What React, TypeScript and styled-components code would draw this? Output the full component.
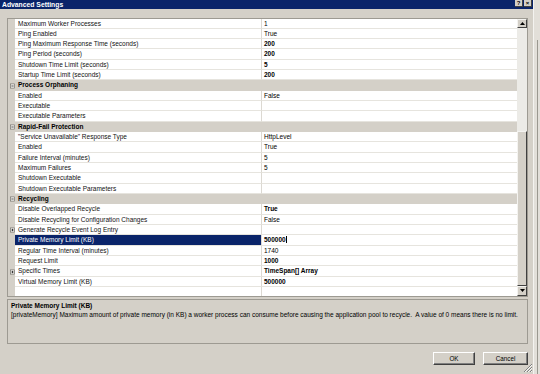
import React from 'react';
import styled, { createGlobalStyle } from 'styled-components';

type Prop = {
  kind: 'prop';
  name: string;
  value?: string;
  bold?: boolean;
  expandable?: boolean;
  selected?: boolean;
};

type Category = {
  kind: 'category';
  name: string;
};

type GridRow = Prop | Category;

const rows: GridRow[] = [
  { kind: 'prop', name: 'Maximum Worker Processes', value: '1' },
  { kind: 'prop', name: 'Ping Enabled', value: 'True' },
  { kind: 'prop', name: 'Ping Maximum Response Time (seconds)', value: '200', bold: true },
  { kind: 'prop', name: 'Ping Period (seconds)', value: '200', bold: true },
  { kind: 'prop', name: 'Shutdown Time Limit (seconds)', value: '5', bold: true },
  { kind: 'prop', name: 'Startup Time Limit (seconds)', value: '200', bold: true },
  { kind: 'category', name: 'Process Orphaning' },
  { kind: 'prop', name: 'Enabled', value: 'False' },
  { kind: 'prop', name: 'Executable' },
  { kind: 'prop', name: 'Executable Parameters' },
  { kind: 'category', name: 'Rapid-Fail Protection' },
  { kind: 'prop', name: '"Service Unavailable" Response Type', value: 'HttpLevel' },
  { kind: 'prop', name: 'Enabled', value: 'True' },
  { kind: 'prop', name: 'Failure Interval (minutes)', value: '5' },
  { kind: 'prop', name: 'Maximum Failures', value: '5' },
  { kind: 'prop', name: 'Shutdown Executable' },
  { kind: 'prop', name: 'Shutdown Executable Parameters' },
  { kind: 'category', name: 'Recycling' },
  { kind: 'prop', name: 'Disable Overlapped Recycle', value: 'True', bold: true },
  { kind: 'prop', name: 'Disable Recycling for Configuration Changes', value: 'False' },
  { kind: 'prop', name: 'Generate Recycle Event Log Entry', expandable: true },
  { kind: 'prop', name: 'Private Memory Limit (KB)', value: '500000', bold: true, selected: true },
  { kind: 'prop', name: 'Regular Time Interval (minutes)', value: '1740' },
  { kind: 'prop', name: 'Request Limit', value: '1000', bold: true },
  { kind: 'prop', name: 'Specific Times', value: 'TimeSpan[] Array', bold: true, expandable: true },
  { kind: 'prop', name: 'Virtual Memory Limit (KB)', value: '500000', bold: true },
  { kind: 'prop', name: '' },
];

const GlobalStyle = createGlobalStyle`
  html, body {
    margin: 0;
    padding: 0;
    background: #d4d0c8;
    overflow: hidden;
  }
  body {
    font-family: "Liberation Sans", Arial, sans-serif;
    font-size: 6.5px;
    color: #000;
  }
`;

const Screen = styled.div`
  display: flex;
  width: 540px;
  height: 374px;
  overflow: hidden;
`;

const Dialog = styled.div`
  width: 533px;
  height: 374px;
  display: flex;
  flex-direction: column;
  background: #d4d0c8;
  position: relative;
`;

const Behind = styled.div`
  flex: 1;
  background: #e2dfd9;
  border-left: 1px solid #f4f3f0;
  display: flex;
  justify-content: flex-end;
  padding-top: 40px;
`;

const BehindLine = styled.div`
  width: 1px;
  margin-right: 2px;
  background: #9a9890;
`;

const TitleBar = styled.div`
  height: 9px;
  background: #0a246a;
  display: flex;
  align-items: center;
  justify-content: space-between;
  padding: 0 1px 0 2px;
`;

const TitleText = styled.span`
  color: #fff;
  font-weight: bold;
  font-size: 6.8px;
  line-height: 9px;
`;

const CaptionButtons = styled.div`
  display: flex;
  gap: 1px;
  align-self: flex-start;
`;

const CaptionButton = styled.div`
  width: 8px;
  height: 7px;
  background: #d4d0c8;
  border-right: 1px solid #404040;
  border-bottom: 1px solid #404040;
  box-sizing: border-box;
  display: flex;
  align-items: center;
  justify-content: center;
  font-weight: bold;
  font-size: 6px;
  line-height: 6px;
`;

const Body = styled.div`
  flex: 1;
  display: flex;
  flex-direction: column;
  padding: 8.5px 5px 0 7px;
`;

const Grid = styled.div`
  height: 279px;
  border: 1px solid #9d9a92;
  box-sizing: border-box;
  display: flex;
  background: #fff;
`;

const RowList = styled.div`
  flex: 1;
  overflow: hidden;
  display: flex;
  flex-direction: column;
`;

const RowLine = styled.div<{ $category?: boolean }>`
  height: 10.33px;
  flex: none;
  display: flex;
  box-sizing: border-box;
  background: ${(p) => (p.$category ? '#d4d0c8' : '#fff')};
`;

const Gutter = styled.div`
  width: 7px;
  flex: none;
  background: #d4d0c8;
  display: flex;
  align-items: center;
  padding-left: 2px;
  box-sizing: border-box;
`;

const NameCell = styled.div<{ $selected?: boolean }>`
  width: 247px;
  flex: none;
  padding-left: 3px;
  box-sizing: border-box;
  border-right: 1px solid #dcd9d2;
  border-bottom: 1px solid #e6e4de;
  line-height: 9.3px;
  white-space: nowrap;
  overflow: hidden;
  background: ${(p) => (p.$selected ? '#0a246a' : 'transparent')};
  color: ${(p) => (p.$selected ? '#fff' : '#111')};
`;

const ValueCell = styled.div<{ $bold?: boolean }>`
  flex: 1;
  padding-left: 2px;
  border-bottom: 1px solid #e6e4de;
  line-height: 9.3px;
  white-space: nowrap;
  font-weight: ${(p) => (p.$bold ? 'bold' : 'normal')};
`;

const Caret = styled.span`
  display: inline-block;
  width: 1px;
  height: 7px;
  background: #000;
  vertical-align: -1px;
  margin-left: 0.5px;
`;

const CategoryName = styled.div`
  flex: 1;
  padding-left: 3px;
  font-weight: bold;
  line-height: 10.33px;
`;

const ScrollBar = styled.div`
  width: 10px;
  flex: none;
  display: flex;
  flex-direction: column;
  background: #ecebe7;
`;

const ScrollArrow = styled.div`
  height: 9.5px;
  flex: none;
  background: #d4d0c8;
  border-top: 1px solid #f4f3f0;
  border-left: 1px solid #f4f3f0;
  border-right: 1px solid #404040;
  border-bottom: 1px solid #404040;
  box-sizing: border-box;
  display: flex;
  align-items: center;
  justify-content: center;
`;

const ScrollTrack = styled.div`
  height: 102.5px;
  flex: none;
`;

const ScrollThumb = styled.div`
  flex: 1;
  background: #d4d0c8;
  border-top: 1px solid #f4f3f0;
  border-left: 1px solid #f4f3f0;
  border-right: 1.5px solid #404040;
  border-bottom: 1px solid #404040;
  box-sizing: border-box;
`;

const Description = styled.div`
  height: 45px;
  margin-top: 2px;
  border: 1px solid #9d9a92;
  box-sizing: border-box;
  padding: 2px 3px;
`;

const DescTitle = styled.div`
  font-weight: bold;
  line-height: 8px;
`;

const DescText = styled.div`
  line-height: 9px;
  white-space: nowrap;
`;

const Footer = styled.div`
  display: flex;
  justify-content: flex-end;
  gap: 8px;
  margin-top: 8.5px;
`;

const Button = styled.div<{ $width: number }>`
  width: ${(p) => p.$width}px;
  height: 13px;
  box-sizing: border-box;
  background: #d4d0c8;
  border-top: 1px solid #fff;
  border-left: 1px solid #fff;
  border-right: 1px solid #404040;
  border-bottom: 1px solid #404040;
  box-shadow: inset -1px -1px 0 #808080;
  display: flex;
  align-items: center;
  justify-content: center;
  font-size: 6.3px;
`;

const Grip = styled.svg`
  position: absolute;
  right: 0;
  bottom: 1px;
`;

const Arrow = ({ up }: { up?: boolean }) => (
  <svg width="5" height="3" viewBox="0 0 5 3">
    <path d={up ? 'M0 3 L2.5 0 L5 3 Z' : 'M0 0 L2.5 3 L5 0 Z'} fill="#000" />
  </svg>
);

const Toggle = ({ plus }: { plus?: boolean }) => (
  <svg width="6" height="6" viewBox="0 0 6 6">
    <rect x="0.5" y="0.5" width="5" height="5" fill="#f6f5f2" stroke="#6f6d66" strokeWidth="0.8" />
    <path d="M1.6 3 H4.4" stroke="#000" strokeWidth="0.8" />
    {plus && <path d="M3 1.6 V4.4" stroke="#000" strokeWidth="0.8" />}
  </svg>
);

const renderRow = (row: GridRow, i: number) => {
  if (row.kind === 'category') {
    return (
      <RowLine key={i} $category>
        <Gutter>
          <Toggle />
        </Gutter>
        <CategoryName>{row.name}</CategoryName>
      </RowLine>
    );
  }
  return (
    <RowLine key={i}>
      <Gutter>{row.expandable && <Toggle plus />}</Gutter>
      <NameCell $selected={row.selected}>{row.name}</NameCell>
      <ValueCell $bold={row.bold}>
        {row.value}
        {row.selected && <Caret />}
      </ValueCell>
    </RowLine>
  );
};

export default function App() {
  return (
    <>
      <GlobalStyle />
      <Screen>
        <Dialog>
          <TitleBar>
            <TitleText>Advanced Settings</TitleText>
            <CaptionButtons>
              <CaptionButton>?</CaptionButton>
              <CaptionButton>×</CaptionButton>
            </CaptionButtons>
          </TitleBar>
          <Body>
            <Grid>
              <RowList>{rows.map(renderRow)}</RowList>
              <ScrollBar>
                <ScrollArrow>
                  <Arrow up />
                </ScrollArrow>
                <ScrollTrack />
                <ScrollThumb />
                <ScrollArrow>
                  <Arrow />
                </ScrollArrow>
              </ScrollBar>
            </Grid>
            <Description>
              <DescTitle>Private Memory Limit (KB)</DescTitle>
              <DescText>
                [privateMemory] Maximum amount of private memory (in KB) a worker process can consume
                before causing the application pool to recycle.&nbsp; A value of 0 means there is no
                limit.
              </DescText>
            </Description>
            <Footer>
              <Button $width={42}>OK</Button>
              <Button $width={45}>Cancel</Button>
            </Footer>
          </Body>
          <Grip width="11" height="11" viewBox="0 0 11 11">
            <path d="M10 2 L2 10 M10 5 L5 10 M10 8 L8 10" stroke="#808080" strokeWidth="1" />
            <path d="M10 3 L3 10 M10 6 L6 10 M10 9 L9 10" stroke="#fff" strokeWidth="0.8" />
          </Grip>
        </Dialog>
        <Behind>
          <BehindLine />
        </Behind>
      </Screen>
    </>
  );
}
